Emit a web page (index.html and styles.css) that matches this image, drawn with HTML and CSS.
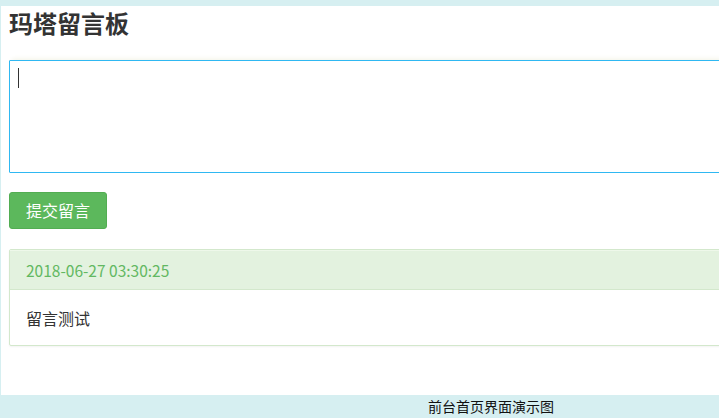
FILE: index.html
```html
<!DOCTYPE html>
<html lang="zh-CN">
<head>
<meta charset="utf-8">
<title>玛塔留言板</title>
<link rel="stylesheet" href="styles.css">
</head>
<body>
<div class="page">
  <div class="card">
    <h1 class="title">玛塔留言板</h1>
    <div class="field">
      <textarea class="input" aria-label="留言内容"></textarea>
      <span class="caret"></span>
    </div>
    <button class="btn" type="button">提交留言</button>
    <div class="panel">
      <div class="panel-heading">2018-06-27 03:30:25</div>
      <div class="panel-body">留言测试</div>
    </div>
  </div>
  <div class="caption">前台首页界面演示图</div>
</div>
</body>
</html>
```
FILE: styles.css
```css
html, body {
  margin: 0;
  padding: 0;
  overflow: hidden;
}
body {
  background: #d6eff1;
  font-family: "Noto Sans CJK SC", "Noto Sans", sans-serif;
  color: #333;
}
.page {
  width: 719px;
  height: 418px;
  overflow: hidden;
}
.card {
  box-sizing: border-box;
  margin: 6px 0 0 1px;
  width: 1100px;
  height: 389px;
  background: #fff;
  padding: 2px 0 0 8px;
}
.title {
  margin: 0;
  font-size: 24px;
  line-height: 30px;
  font-weight: bold;
  color: #333;
}
.field {
  position: relative;
  margin-top: 22px;
  width: 1000px;
  height: 113px;
}
.input {
  box-sizing: border-box;
  display: block;
  width: 100%;
  height: 113px;
  margin: 0;
  border: 1px solid #2fb8f2;
  border-radius: 1px;
  outline: none;
  resize: none;
  caret-color: transparent;
  box-shadow: 0 -4px 5px -3px #f3f3e6;
  font: 14px "Noto Sans CJK SC", sans-serif;
}
.caret {
  position: absolute;
  left: 9px;
  top: 8px;
  width: 1px;
  height: 20px;
  background: #333;
}
.btn {
  display: block;
  box-sizing: border-box;
  margin-top: 19px;
  width: 98px;
  height: 37px;
  padding: 0;
  border: 1px solid #52ad52;
  border-radius: 3px;
  background: #5cb85c;
  color: #fff;
  font: 16px "Noto Sans CJK SC", sans-serif;
  line-height: 35px;
}
.panel {
  margin-top: 20px;
  width: 1000px;
  border: 1px solid #d3e8cc;
  border-radius: 2px;
  box-shadow: 0 1px 2px rgba(0, 0, 0, 0.05);
}
.panel-heading {
  box-sizing: border-box;
  height: 40px;
  padding: 0 16px;
  background: #e3f2df;
  border-top: 1px solid #eef8ea;
  border-bottom: 1px solid #d3e8cc;
  color: #62b862;
  font-size: 15.5px;
  line-height: 38px;
}
.panel-body {
  height: 55px;
  padding: 0 16px;
  font-size: 16px;
  line-height: 57px;
  color: #333;
}
.caption {
  height: 23px;
  padding-left: 428px;
  font-size: 14px;
  line-height: 23px;
  color: #111;
}
```
